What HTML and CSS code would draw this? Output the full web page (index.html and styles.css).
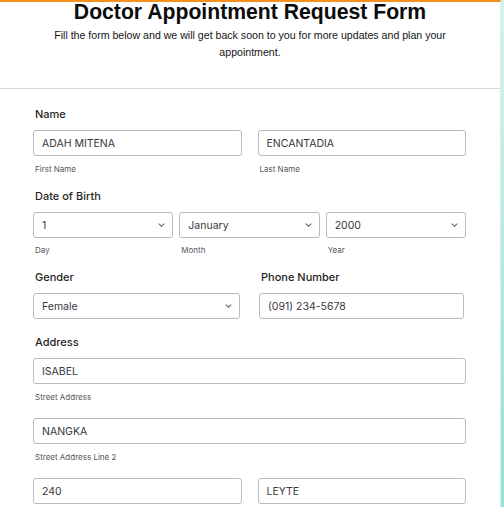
FILE: index.html
```html
<!DOCTYPE html>
<html lang="en">
<head>
<meta charset="utf-8">
<title>Doctor Appointment Request Form</title>
<link rel="stylesheet" href="styles.css">
</head>
<body>
<div class="card">
  <header class="head">
    <h1 class="title">Doctor Appointment Request Form</h1>
    <p class="intro">Fill the form below and we will get back soon to you for more updates and plan your appointment.</p>
  </header>
  <div class="form">
    <div class="field">
      <div class="label">Name</div>
      <div class="grid2">
        <div><div class="box">ADAH MITENA</div><div class="sub">First Name</div></div>
        <div><div class="box">ENCANTADIA</div><div class="sub">Last Name</div></div>
      </div>
    </div>
    <div class="field">
      <div class="label">Date of Birth</div>
      <div class="grid3">
        <div><div class="box select"><span>1</span><svg class="chev" width="7" height="4" viewBox="0 0 7 4"><path d="M0.7 0.6l2.8 2.6 2.8-2.6" fill="none" stroke="#6b6b73" stroke-width="1.1"/></svg></div><div class="sub sub-sel">Day</div></div>
        <div><div class="box select"><span>January</span><svg class="chev" width="7" height="4" viewBox="0 0 7 4"><path d="M0.7 0.6l2.8 2.6 2.8-2.6" fill="none" stroke="#6b6b73" stroke-width="1.1"/></svg></div><div class="sub sub-sel">Month</div></div>
        <div><div class="box select"><span>2000</span><svg class="chev" width="7" height="4" viewBox="0 0 7 4"><path d="M0.7 0.6l2.8 2.6 2.8-2.6" fill="none" stroke="#6b6b73" stroke-width="1.1"/></svg></div><div class="sub sub-sel">Year</div></div>
      </div>
    </div>
    <div class="field grid-gp">
      <div>
        <div class="label">Gender</div>
        <div class="box select"><span>Female</span><svg class="chev" width="7" height="4" viewBox="0 0 7 4"><path d="M0.7 0.6l2.8 2.6 2.8-2.6" fill="none" stroke="#6b6b73" stroke-width="1.1"/></svg></div>
      </div>
      <div>
        <div class="label">Phone Number</div>
        <div class="box">(091) 234-5678</div>
      </div>
    </div>
    <div class="field field-gap">
      <div class="label">Address</div>
      <div class="stack">
        <div><div class="box">ISABEL</div><div class="sub">Street Address</div></div>
        <div><div class="box">NANGKA</div><div class="sub">Street Address Line 2</div></div>
        <div class="grid2">
          <div><div class="box">240</div></div>
          <div><div class="box">LEYTE</div></div>
        </div>
      </div>
    </div>
  </div>
</div>
</body>
</html>
```

FILE: styles.css
```css
* { box-sizing: border-box; }
html, body { margin: 0; padding: 0; }
body {
  width: 504px;
  min-height: 507px;
  background: linear-gradient(#d3f4f0, #7fdfd2);
  font-family: "Inter", "Liberation Sans", sans-serif;
  overflow: hidden;
}
.card {
  width: 501px;
  min-height: 620px;
  background: #fff;
  border-top: 2px solid #f7901e;
  border-right: 1px solid #e3e6e6;
}
.head {
  border-bottom: 1px solid #d8d8d8;
  padding-bottom: 28px;
  text-align: center;
}
.title {
  margin: -1px 0 0;
  font-family: "Liberation Sans", Arial, sans-serif;
  font-weight: 700;
  font-size: 21.2px;
  line-height: 22px;
  color: #0c0c0c;
}
.intro {
  margin: 4px auto 0;
  width: 410px;
  font-family: "Liberation Sans", Arial, sans-serif;
  font-size: 10.6px;
  line-height: 16.5px;
  color: #141414;
}
.form {
  padding: 18px 34px 0 33px;
  display: flex;
  flex-direction: column;
  gap: 15px;
}
.label {
  font-size: 11px;
  font-weight: 500;
  line-height: 14px;
  color: #1f1f24;
  margin: 0 0 9px 2px;
}
.grid2 {
  display: grid;
  grid-template-columns: 1fr 1fr;
  column-gap: 16px;
}
.grid3 {
  display: grid;
  grid-template-columns: 1fr 1fr 1fr;
  column-gap: 6px;
}
.grid-gp {
  display: grid;
  grid-template-columns: 207px 205px;
  column-gap: 19px;
}
.field-gap { margin-top: 1px; }
.stack {
  display: flex;
  flex-direction: column;
  gap: 16px;
}
.box {
  height: 26px;
  border: 1px solid #b8b9c3;
  border-radius: 3px;
  padding: 0 6px 0 8px;
  display: flex;
  align-items: center;
  font-size: 10.5px;
  color: #38383d;
  background: #fff;
}
.select { justify-content: space-between; }
.chev { display: block; margin-right: 1px; }
.sub {
  margin: 8px 0 0 2px;
  font-size: 8px;
  line-height: 10px;
  color: #54545c;
}
.sub-sel { margin-top: 7px; }
```
